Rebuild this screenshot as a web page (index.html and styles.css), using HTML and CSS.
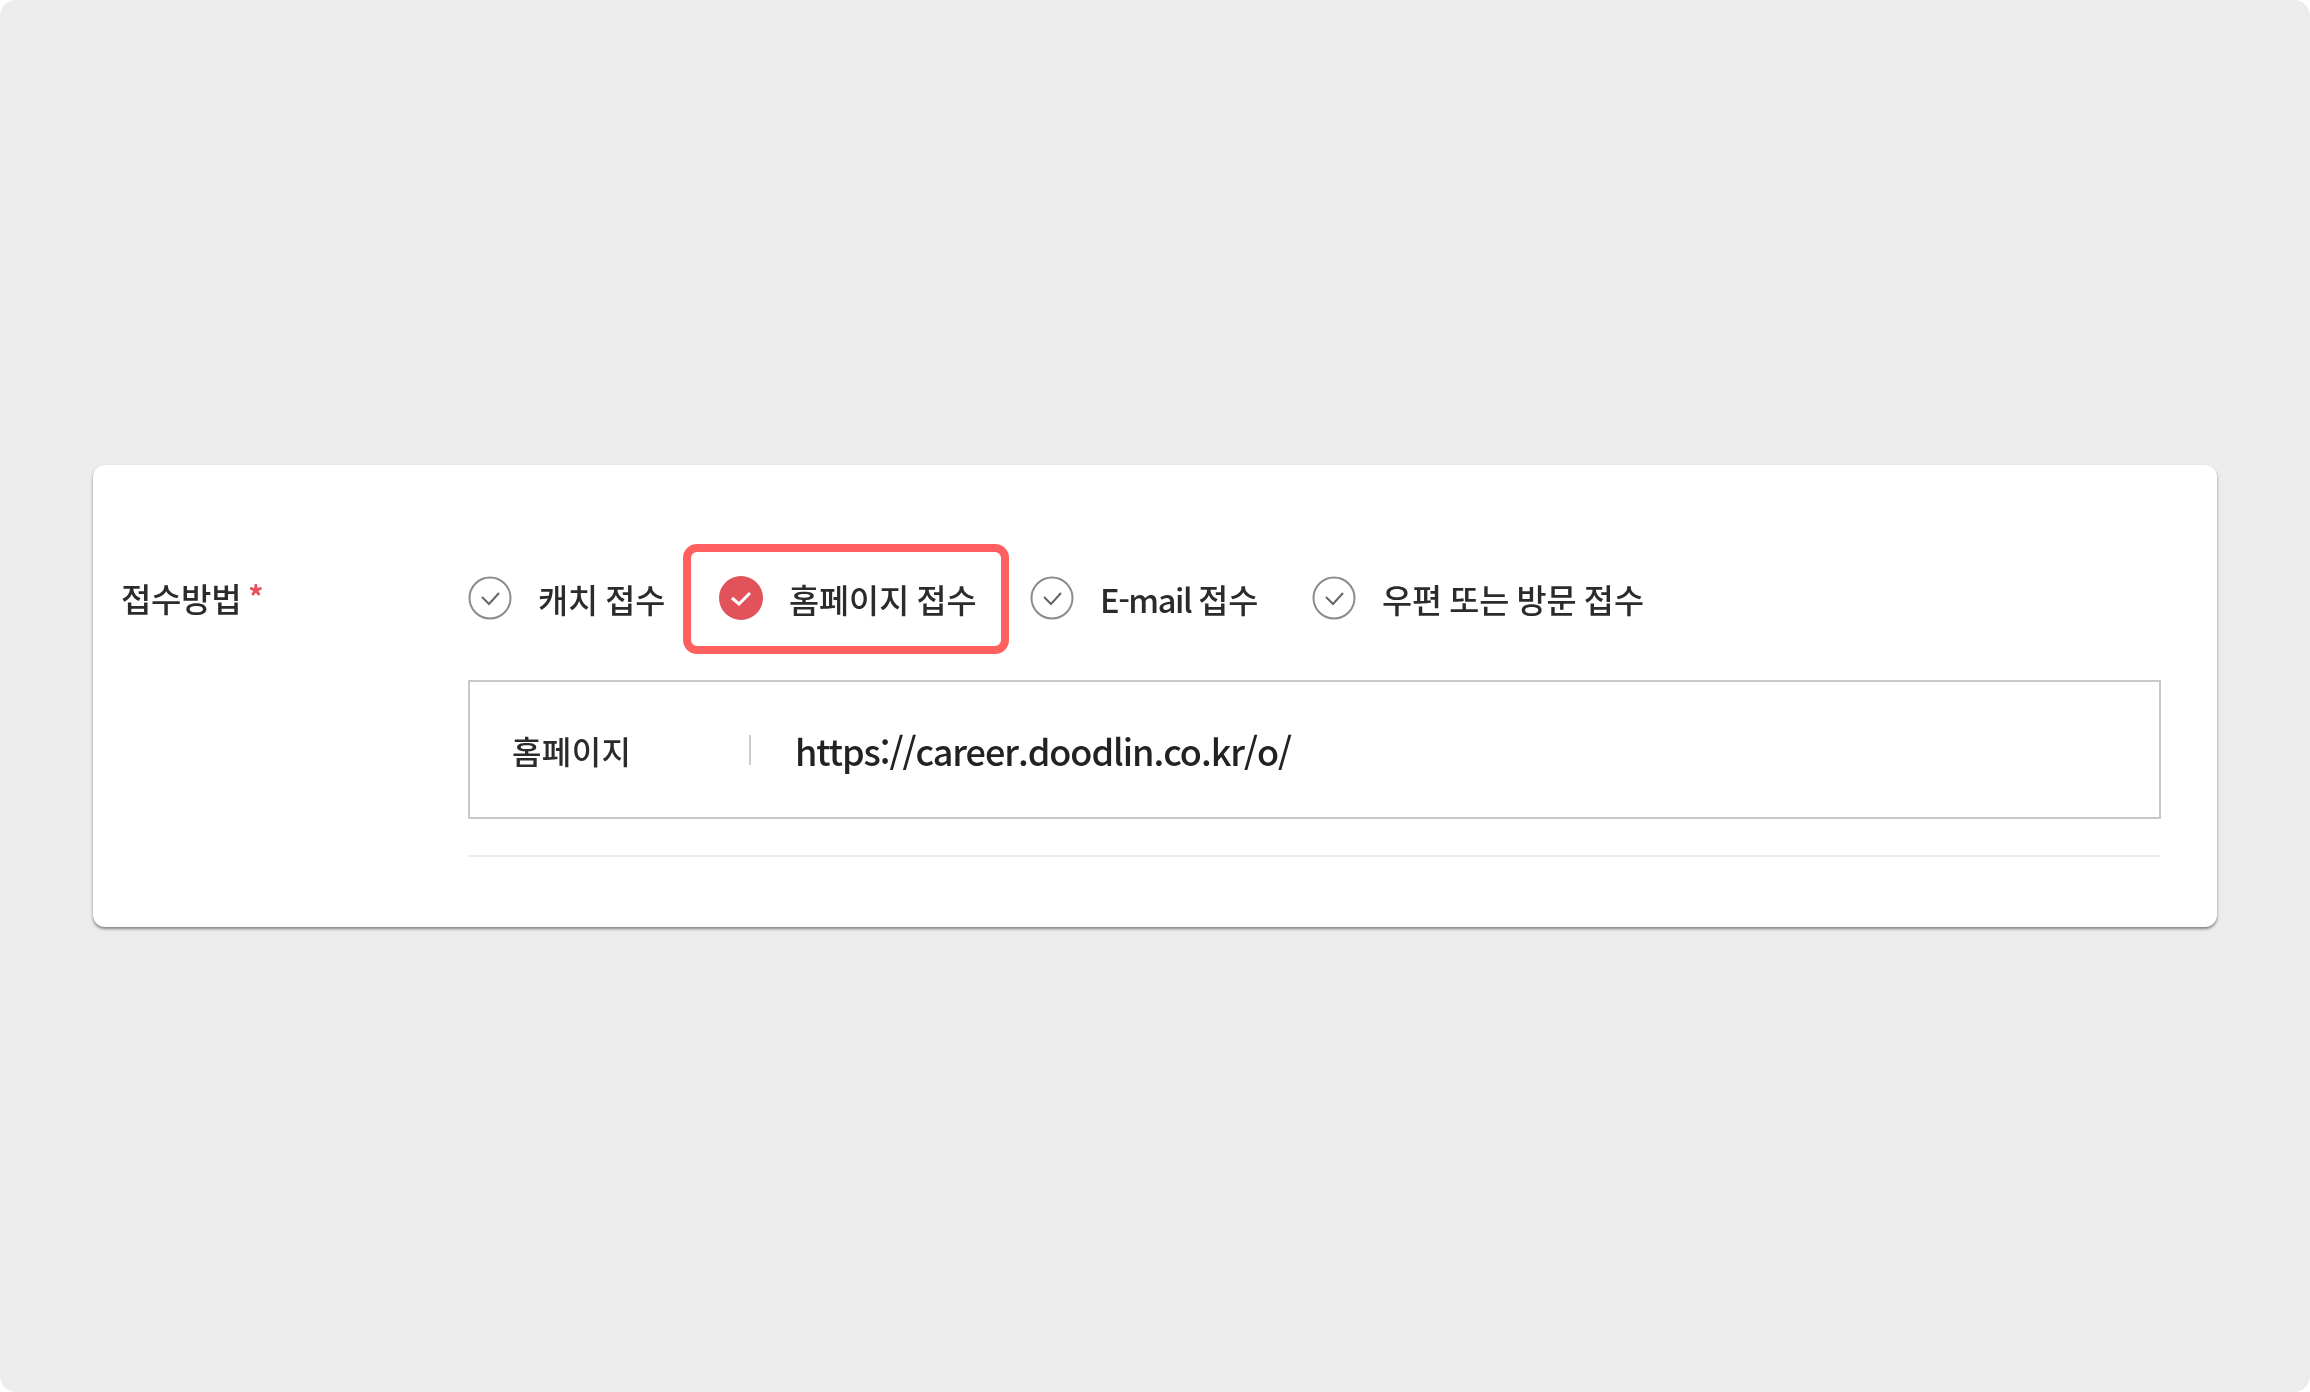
FILE: index.html
```html
<!DOCTYPE html>
<html lang="ko">
<head>
    <meta charset="UTF-8">
    <title>접수방법</title>
    <link rel="stylesheet" href="styles.css">
</head>
<body>

    <main class="frame">
        <section class="card">
            <div class="label">접수방법 <span class="required">*</span></div>

            <div class="field">
                <!-- Options -->
                <div class="options">
                    <div class="option">
                        <svg class="check" viewBox="0 0 44 44"><circle cx="22" cy="22" r="20.5" fill="#fff" stroke="#8c8c8c" stroke-width="2"/><path d="M14 21l7 7 10-11" fill="none" stroke="#666" stroke-width="2"/></svg>
                        <span>캐치 접수</span>
                    </div>
                    <div class="option selected">
                        <svg class="check" viewBox="0 0 44 44"><circle cx="22" cy="22" r="22" fill="#e2525a"/><path d="M13 22l7 6 11-11" fill="none" stroke="#fff" stroke-width="3"/></svg>
                        <span>홈페이지 접수</span>
                    </div>
                    <div class="option">
                        <svg class="check" viewBox="0 0 44 44"><circle cx="22" cy="22" r="20.5" fill="#fff" stroke="#8c8c8c" stroke-width="2"/><path d="M14 21l7 7 10-11" fill="none" stroke="#666" stroke-width="2"/></svg>
                        <span><span class="latin">E-mail</span> 접수</span>
                    </div>
                    <div class="option">
                        <svg class="check" viewBox="0 0 44 44"><circle cx="22" cy="22" r="20.5" fill="#fff" stroke="#8c8c8c" stroke-width="2"/><path d="M14 21l7 7 10-11" fill="none" stroke="#666" stroke-width="2"/></svg>
                        <span>우편 또는 방문 접수</span>
                    </div>
                </div>

                <!-- Homepage address -->
                <div class="url-box">
                    <span class="url-label">홈페이지</span>
                    <span class="url-text">https://career.doodlin.co.kr/o/</span>
                </div>

                <hr class="divider">
            </div>
        </section>
    </main>

</body>
</html>
```

FILE: styles.css
```css
/* Global Styles */
* {
    margin: 0;
    padding: 0;
    box-sizing: border-box;
}

body {
    font-family: "Noto Sans CJK KR", "Noto Sans", sans-serif;
    background-color: #fff;
    color: #2b2b2b;
}

.frame {
    width: 2310px;
    height: 1392px;
    background-color: #ececec;
    border-radius: 16px;
    display: flex;
    align-items: center;
    justify-content: center;
}

.card {
    width: 2124px;
    height: 462px;
    padding: 79px 56px 0 28px;
    background-color: #fff;
    border-radius: 12px;
    box-shadow: 0 2px 3px rgba(0, 0, 0, 0.45);
    display: grid;
    grid-template-columns: 347px 1fr;
    filter: blur(0.5px);
}

.label {
    height: 108px;
    display: flex;
    align-items: center;
    gap: 7px;
    font-size: 33px;
    font-weight: 500;
    letter-spacing: -0.3px;
}

.required {
    color: #e8505b;
    font-size: 30px;
    font-weight: 700;
    margin-bottom: 6px;
}

.options {
    height: 108px;
    display: flex;
    align-items: center;
    gap: 53.5px;
}

.option {
    position: relative;
    height: 46px;
    display: flex;
    align-items: center;
    gap: 26px;
    font-size: 32.7px;
    font-weight: 500;
    word-spacing: -2px;
}

.latin {
    letter-spacing: -1.5px;
}

.check {
    width: 44px;
    height: 44px;
    flex-shrink: 0;
}

/* red highlight around the selected option */
.selected::after {
    content: "";
    position: absolute;
    top: -31px;
    right: -32px;
    bottom: -33px;
    left: -36px;
    border: 8px solid #ff5f5f;
    border-radius: 14px;
}

.url-box {
    height: 139px;
    margin-top: 28px;
    padding-left: 42px;
    border: 2px solid #c8c8c8;
    display: flex;
    align-items: center;
}

.url-label {
    width: 237px;
    font-size: 32px;
    font-weight: 500;
    letter-spacing: 0.4px;
}

.url-text {
    padding-left: 44px;
    border-left: 2px solid #ccc;
    font-size: 36px;
    font-weight: 500;
    letter-spacing: -1.05px;
    line-height: 30px;
    color: #222;
}

.divider {
    margin-top: 36px;
    border: 0;
    border-top: 2px solid #ececec;
}
```
